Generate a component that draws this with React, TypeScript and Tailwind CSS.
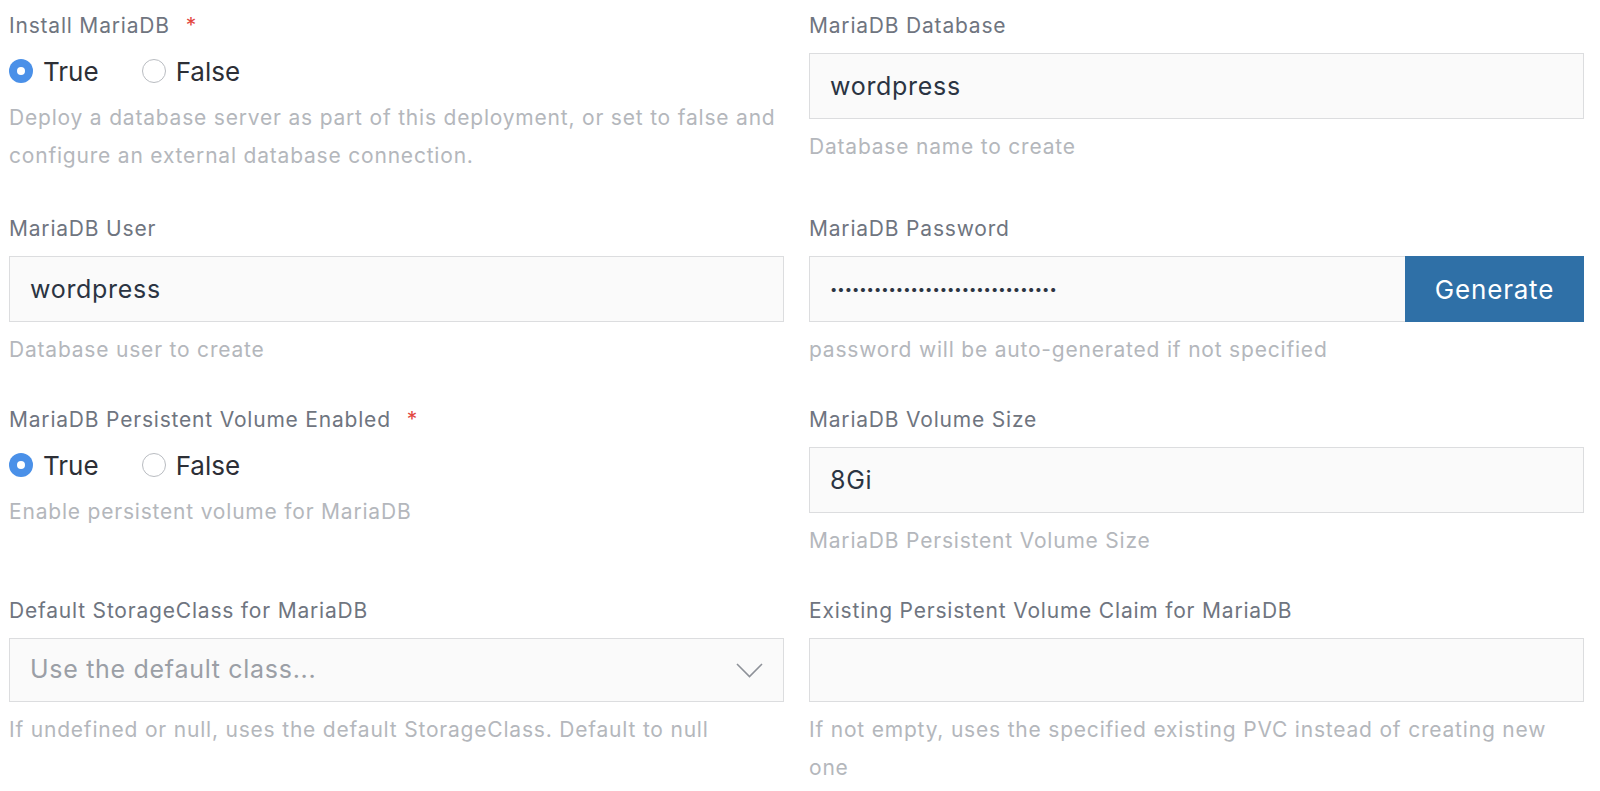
const font = { fontFamily: "Inter, 'Open Sans', sans-serif" };

const Label = ({ text, required }: { text: string; required?: boolean }) => (
  <div className="h-[24px] leading-[24px] text-[21px] tracking-[0.8px] text-[#6f7580] mb-[15px] whitespace-nowrap">
    {text}
    {required && <span className="ml-[16px] text-[#e2473f]">*</span>}
  </div>
);

const Help = ({ children }: { children: React.ReactNode }) => (
  <div className="mt-[9px] text-[21px] tracking-[0.8px] leading-[38px] text-[#b4b7bc] whitespace-nowrap">
    {children}
  </div>
);

const Radio = ({ label, checked }: { label: string; checked?: boolean }) => (
  <label className="flex items-center gap-[10px] cursor-pointer">
    {checked ? (
      <span className="w-[24px] h-[24px] rounded-full bg-[#4a90e8] flex items-center justify-center">
        <span className="w-[8px] h-[8px] rounded-full bg-white" />
      </span>
    ) : (
      <span className="w-[24px] h-[24px] rounded-full border border-[#b9bcc1] bg-white" />
    )}
    <span className="text-[26px] text-[#2d2f36]">{label}</span>
  </label>
);

const RadioField = ({ label, help }: { label: string; help: React.ReactNode }) => (
  <div className="pb-[3px]">
    <div className="h-[24px] leading-[24px] text-[21px] tracking-[0.8px] text-[#6f7580] whitespace-nowrap">
      {label}
      <span className="ml-[16px] text-[#e2473f]">*</span>
    </div>
    <div className="mt-[13px] h-[40px] flex items-center gap-[43px]">
      <Radio label="True" checked />
      <Radio label="False" />
    </div>
    <div className="mt-[8px] text-[21px] tracking-[0.8px] leading-[38px] text-[#b4b7bc] whitespace-nowrap">
      {help}
    </div>
  </div>
);

const inputCls =
  "w-full h-[66px] px-[20px] bg-[#fafafa] border border-[#dcdddf] text-[25px] tracking-[0.7px] text-[#2b3442] outline-none";

const TextField = ({ label, value, help }: { label: string; value: string; help: React.ReactNode }) => (
  <div>
    <Label text={label} />
    <input className={inputCls} defaultValue={value} style={font} />
    <Help>{help}</Help>
  </div>
);

export default function App() {
  return (
    <div className="bg-white min-h-screen pl-[9px] pt-[14px]" style={font}>
      <div className="grid grid-cols-[775px_775px] gap-x-[25px] gap-y-[39px]">
        <RadioField
          label="Install MariaDB"
          help={
            <>
              Deploy a database server as part of this deployment, or set to false and
              <br />
              configure an external database connection.
            </>
          }
        />
        <TextField label="MariaDB Database" value="wordpress" help="Database name to create" />

        <TextField label="MariaDB User" value="wordpress" help="Database user to create" />
        <div>
          <Label text="MariaDB Password" />
          <div className="flex h-[66px]">
            <input
              type="password"
              className="flex-1 min-w-0 h-full px-[20px] bg-[#fafafa] border border-[#dcdddf] border-r-0 text-[13px] text-[#2b3442] outline-none"
              defaultValue="wordpresspassword12345678901234"
              style={font}
            />
            <button className="w-[179px] h-full bg-[#2f70a7] text-white text-[26px] tracking-[0.8px]">
              Generate
            </button>
          </div>
          <Help>password will be auto-generated if not specified</Help>
        </div>

        <RadioField label="MariaDB Persistent Volume Enabled" help="Enable persistent volume for MariaDB" />
        <TextField label="MariaDB Volume Size" value="8Gi" help="MariaDB Persistent Volume Size" />

        <div>
          <Label text="Default StorageClass for MariaDB" />
          <div className="w-full h-[64px] pl-[20px] pr-[20px] bg-[#fafafa] border border-[#dcdddf] flex items-center justify-between">
            <span className="text-[25px] tracking-[0.7px] text-[#9b9fa6]">Use the default class...</span>
            <svg width="27" height="15" viewBox="0 0 27 15" fill="none">
              <polyline points="1,1 13.5,13.5 26,1" stroke="#8d9198" strokeWidth="1.6" />
            </svg>
          </div>
          <Help>If undefined or null, uses the default StorageClass. Default to null</Help>
        </div>
        <div>
          <Label text="Existing Persistent Volume Claim for MariaDB" />
          <input className="w-full h-[64px] px-[20px] bg-[#fafafa] border border-[#dcdddf] outline-none" />
          <Help>
            If not empty, uses the specified existing PVC instead of creating new
            <br />
            one
          </Help>
        </div>
      </div>
    </div>
  );
}
